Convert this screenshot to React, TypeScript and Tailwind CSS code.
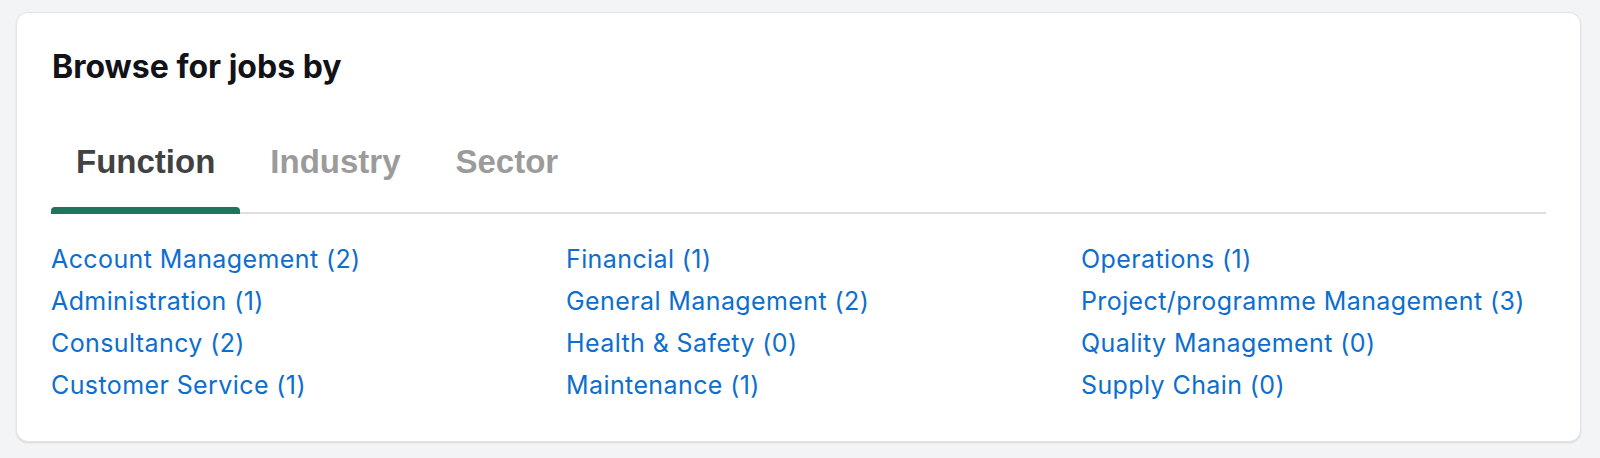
import React, { useState } from "react";

const columns: string[][] = [
  ["Account Management (2)", "Administration (1)", "Consultancy (2)", "Customer Service (1)"],
  ["Financial (1)", "General Management (2)", "Health & Safety (0)", "Maintenance (1)"],
  ["Operations (1)", "Project/programme Management (3)", "Quality Management (0)", "Supply Chain (0)"],
];

const tabs = ["Function", "Industry", "Sector"];

export default function App() {
  const [active, setActive] = useState(0);
  return (
    <div className="h-[458px] w-[1600px] bg-[#f3f4f6] pt-3 pl-4 font-['Inter',sans-serif]">
      <div className="w-[1565px] h-[430px] rounded-xl border border-[#e2e3e5] bg-white shadow-[0_1px_2px_rgba(0,0,0,0.12)] px-[34px] pt-[36px]">
        <h2 className="text-[32px] leading-[36px] font-bold text-[#111318] pl-[1px]">
          Browse for jobs by
        </h2>
        <div className="mt-[57px] relative flex gap-[5px]">
          <div className="absolute left-0 right-0 bottom-0 h-[2px] bg-[#dedede]" />
          {tabs.map((t, i) => (
            <button
              key={t}
              onClick={() => setActive(i)}
              className={`relative px-[25px] pb-[32px] text-[33px] leading-[40px] font-bold font-['Liberation_Sans',Arial,sans-serif] ${
                i === active ? "text-[#424242]" : "text-[#9b9b9b]"
              }`}
            >
              {t}
              {i === active && (
                <span className="absolute left-0 right-0 bottom-0 h-[7px] rounded-t-[4px] bg-[#1b765c]" />
              )}
            </button>
          ))}
        </div>
        <div className="mt-[24px] grid grid-cols-[515px_515px_1fr]">
          {columns.map((col, ci) => (
            <ul key={ci} className="flex flex-col">
              {col.map((item) => (
                <li key={item} className="text-[25px] leading-[42px] tracking-[0.4px] text-[#0d6ecd]">
                  <a href="#" onClick={(e) => e.preventDefault()}>
                    {item}
                  </a>
                </li>
              ))}
            </ul>
          ))}
        </div>
      </div>
    </div>
  );
}
